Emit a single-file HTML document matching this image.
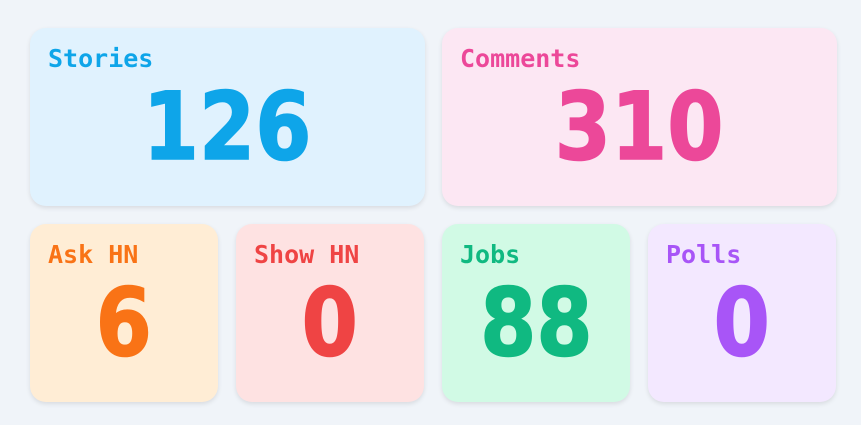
<!DOCTYPE html>
<html><head><style>
body{margin:0;width:861px;height:425px;background:#f0f4f9;position:relative;overflow:hidden;font-family:"DejaVu Sans Mono","Liberation Mono",monospace;}
.c{position:absolute;border-radius:16px;box-shadow:0 2px 5px rgba(0,0,0,0.1);}
.l{position:absolute;left:18px;top:16px;font-size:25px;font-weight:bold;line-height:30px;}
.n{position:absolute;left:0;right:0;text-align:center;font-family:"DejaVu Sans",sans-serif;font-size:94px;font-weight:bold;line-height:104px;top:48px;}
.n span{display:inline-block;transform:scaleX(0.86);transform-origin:center;-webkit-text-stroke:1.5px currentColor;}
</style></head><body>
<div class="c" style="left:30px;top:28px;width:395px;height:178px;background:#e0f2fe;color:#0ea5e9"><div class="l">Stories</div><div class="n"><span>126</span></div></div>
<div class="c" style="left:442px;top:28px;width:395px;height:178px;background:#fce7f3;color:#ec4899"><div class="l">Comments</div><div class="n"><span>310</span></div></div>
<div class="c" style="left:30px;top:224px;width:188px;height:178px;background:#ffedd5;color:#f97316"><div class="l">Ask HN</div><div class="n"><span>6</span></div></div>
<div class="c" style="left:236px;top:224px;width:188px;height:178px;background:#fee2e2;color:#ef4444"><div class="l">Show HN</div><div class="n"><span>0</span></div></div>
<div class="c" style="left:442px;top:224px;width:188px;height:178px;background:#d1fae5;color:#10b981"><div class="l">Jobs</div><div class="n"><span>88</span></div></div>
<div class="c" style="left:648px;top:224px;width:188px;height:178px;background:#f3e8ff;color:#a855f7"><div class="l">Polls</div><div class="n"><span>0</span></div></div>
</body></html>
